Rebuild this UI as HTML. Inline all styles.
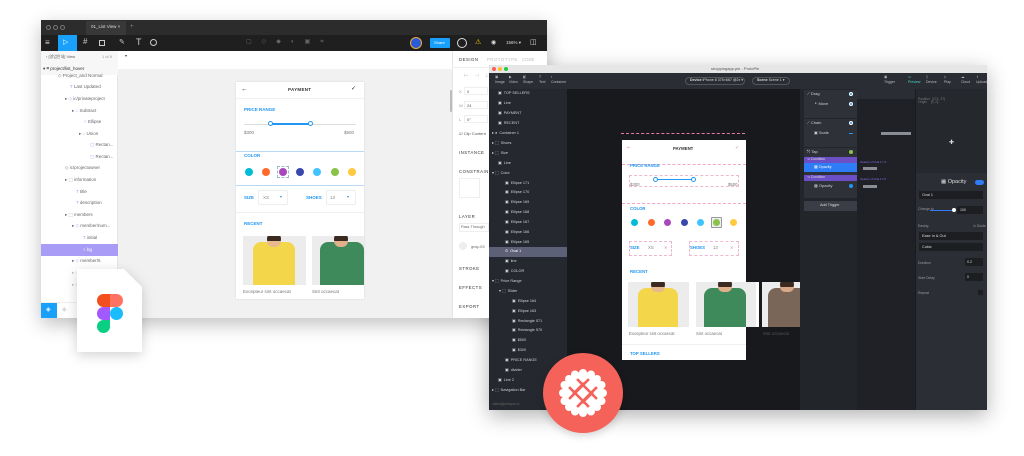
<!DOCTYPE html>
<html><head><meta charset="utf-8"><style>
*{margin:0;padding:0;box-sizing:border-box}
body{width:1024px;height:456px;background:#fff;position:relative;overflow:hidden;font-family:"Liberation Sans",sans-serif}
.a{position:absolute}
.t{position:absolute;white-space:nowrap;line-height:1}
.fl{font-size:4.5px;color:#555}
.pl{font-size:4px;color:#cfd2d8}
.dot{position:absolute;border-radius:50%}
</style></head><body>

<div class="a" style="left:41px;top:20px;width:506px;height:298px;box-shadow:0 6px 18px rgba(0,0,0,.25)"></div>
<div class="a" style="left:489px;top:65px;width:498px;height:345px;box-shadow:0 6px 20px rgba(0,0,0,.3)"></div>

<!-- ================= FIGMA ================= -->
<div class="a" style="left:41px;top:20px;width:506px;height:298px;background:#f1f1f1;overflow:hidden">
  <div class="a" style="left:0;top:0;width:506px;height:15px;background:#2c2c2c"></div>
  <div class="dot" style="left:5px;top:5px;width:5px;height:5px;border:1px solid #777"></div>
  <div class="dot" style="left:12px;top:5px;width:5px;height:5px;border:1px solid #777"></div>
  <div class="dot" style="left:19px;top:5px;width:5px;height:5px;border:1px solid #777"></div>
  <div class="a" style="left:45px;top:1px;width:40px;height:14px;background:#383838"></div>
  <div class="t" style="left:50px;top:5px;font-size:4.5px;color:#ddd">01_List View ×</div>
  <div class="t" style="left:89px;top:4px;font-size:6px;color:#888">+</div>
  <div class="a" style="left:0;top:15px;width:506px;height:16px;background:#1f1f1f"></div>
  <div class="t" style="left:4px;top:19px;font-size:8px;color:#ddd">≡</div>
  <div class="a" style="left:17px;top:15px;width:19px;height:16px;background:#18a0fb"></div>
  <div class="t" style="left:22px;top:19px;font-size:7px;color:#fff">▷</div>
  <div class="t" style="left:42px;top:18px;font-size:8px;color:#ccc">#</div>
  <div class="a" style="left:58px;top:20px;width:6px;height:6px;border:1px solid #ccc"></div>
  <div class="t" style="left:78px;top:19px;font-size:7px;color:#ccc">✎</div>
  <div class="t" style="left:95px;top:18px;font-size:9px;color:#ccc">T</div>
  <div class="dot" style="left:109px;top:19px;width:7px;height:7px;border:1px solid #ccc"></div>
  <div class="t" style="left:205px;top:19px;font-size:6px;color:#666;letter-spacing:10px">▢◇◆◐▣⌗</div>
  <div class="dot" style="left:369px;top:17px;width:12px;height:12px;background:#2a5bd7;border:1.5px solid #f2a93b"></div>
  <div class="a" style="left:389px;top:18px;width:20px;height:10px;background:#18a0fb;border-radius:1px"></div>
  <div class="t" style="left:393px;top:21px;font-size:4px;color:#fff">Share</div>
  <div class="dot" style="left:416px;top:18px;width:10px;height:10px;border:1px solid #ddd"></div>
  <div class="t" style="left:434px;top:19px;font-size:7px;color:#f5c400">⚠</div>
  <div class="t" style="left:450px;top:20px;font-size:6px;color:#ddd">◉</div>
  <div class="t" style="left:465px;top:21px;font-size:4.5px;color:#ddd">156% ▾</div>
  <div class="t" style="left:489px;top:19px;font-size:7px;color:#ddd">◫</div>

  <div class="a" style="left:0;top:31px;width:77px;height:267px;background:#fff;border-right:1px solid #e5e5e5"></div>
  <div class="a" style="left:0;top:31px;width:77px;height:24px;background:#f7f7f7"></div>
  <div class="t fl" style="left:5px;top:35px;font-size:4px">‹ [영업안내] View</div>
  <div class="t fl" style="left:61px;top:35px;font-size:4px;color:#999">1 of 8</div>
  <div class="t fl" style="left:2px;top:47px;color:#333">▾ ⌗ project/list_hover</div>
  <div class="t fl" style="left:17px;top:54px;color:#666">◇ Project_and Normal</div>
  <div class="t fl" style="left:29px;top:65px;color:#666"><span style="color:#a99cf7">T</span> Last Updated</div>
  <div class="t fl" style="left:24px;top:77px;color:#666">▸ <span style="color:#a99cf7">◇</span> ic/privateproject</div>
  <div class="t fl" style="left:31px;top:89px;color:#666">▸ <span style="color:#a99cf7">⌂</span> Subtract</div>
  <div class="t fl" style="left:43px;top:100px;color:#666"><span style="color:#a99cf7">○</span> Ellipse</div>
  <div class="t fl" style="left:38px;top:112px;color:#666">▸ <span style="color:#a99cf7">⌂</span> Union</div>
  <div class="t fl" style="left:49px;top:123px;color:#666"><span style="color:#a99cf7">▢</span> Rectan...</div>
  <div class="t fl" style="left:49px;top:135px;color:#666"><span style="color:#a99cf7">▢</span> Rectan...</div>
  <div class="t fl" style="left:24px;top:146px;color:#666">◇ ic/projectowner</div>
  <div class="t fl" style="left:24px;top:158px;color:#666">▸ ⬚ information</div>
  <div class="t fl" style="left:35px;top:170px;color:#666"><span style="color:#a99cf7">T</span> title</div>
  <div class="t fl" style="left:35px;top:181px;color:#666"><span style="color:#a99cf7">T</span> description</div>
  <div class="t fl" style="left:24px;top:193px;color:#666">▸ ⬚ members</div>
  <div class="t fl" style="left:31px;top:204px;color:#666">▸ <span style="color:#a99cf7">◇</span> member/num...</div>
  <div class="t fl" style="left:42px;top:216px;color:#666"><span style="color:#a99cf7">T</span> initial</div>
  <div class="a" style="left:0;top:224px;width:77px;height:12px;background:#a99cf7"></div>
  <div class="t fl" style="left:42px;top:228px;color:#fff">○ bg</div>
  <div class="t fl" style="left:31px;top:239px;color:#666">▸ <span style="color:#a99cf7">◇</span> member/5</div>
  <div class="t fl" style="left:31px;top:251px;color:#bbb">▸ ◇</div>
  <div class="t fl" style="left:31px;top:263px;color:#bbb">▸ ◇</div>
  <div class="a" style="left:0;top:282px;width:77px;height:1px;background:#eee"></div>
  <div class="a" style="left:0;top:283px;width:16px;height:15px;background:#18a0fb"></div>
  <div class="t" style="left:5px;top:287px;font-size:6px;color:#fff">◈</div>
  <div class="t" style="left:21px;top:287px;font-size:6px;color:#ccc">◈</div>

  <div class="a" style="left:77px;top:31px;width:334px;height:18px;background:#fff"></div>
  <div class="t" style="left:84px;top:34px;font-size:4px;color:#333">▾</div>
  <div class="a" style="left:409px;top:70px;width:2px;height:22px;background:#bbb;border-radius:1px"></div>

  <div class="a" style="left:411px;top:31px;width:95px;height:267px;background:#fff;border-left:1px solid #e5e5e5"></div>
  <div class="t" style="left:418px;top:38px;font-size:4.3px;color:#333;letter-spacing:.5px">DESIGN</div>
  <div class="t" style="left:446px;top:38px;font-size:4.3px;color:#bbb;letter-spacing:.5px">PROTOTYPE</div>
  <div class="t" style="left:481px;top:38px;font-size:4.3px;color:#bbb">CODE</div>
  <div class="a" style="left:411px;top:47px;width:95px;height:1px;background:#eee"></div>
  <div class="t" style="left:423px;top:54px;font-size:5px;color:#bbb;letter-spacing:6px">⊢⊣⊥</div>
  <div class="t" style="left:418px;top:70px;font-size:4px;color:#999">X</div><div class="a" style="left:423px;top:67px;width:24px;height:8px;border:1px solid #eee"></div><div class="t" style="left:426px;top:70px;font-size:4px;color:#555">0</div>
  <div class="t" style="left:418px;top:84px;font-size:4px;color:#999">W</div><div class="a" style="left:423px;top:81px;width:24px;height:8px;border:1px solid #eee"></div><div class="t" style="left:426px;top:84px;font-size:4px;color:#555">24</div>
  <div class="t" style="left:418px;top:98px;font-size:4px;color:#999">L</div><div class="a" style="left:423px;top:95px;width:24px;height:8px;border:1px solid #eee"></div><div class="t" style="left:426px;top:98px;font-size:4px;color:#555">0°</div>
  <div class="t" style="left:418px;top:112px;font-size:4px;color:#555">☑ Clip Content</div>
  <div class="t" style="left:418px;top:131px;font-size:4.3px;color:#333;letter-spacing:.5px">INSTANCE</div>
  <div class="t" style="left:418px;top:150px;font-size:4.3px;color:#333;letter-spacing:.5px">CONSTRAINTS</div>
  <div class="a" style="left:418px;top:158px;width:21px;height:20px;border:1px solid #eee"></div>
  <div class="t" style="left:418px;top:195px;font-size:4.3px;color:#333;letter-spacing:.5px">LAYER</div>
  <div class="a" style="left:418px;top:203px;width:30px;height:9px;border:1px solid #eee"></div>
  <div class="t" style="left:420px;top:206px;font-size:3.8px;color:#666">Pass Through</div>
  <div class="dot" style="left:418px;top:222px;width:8px;height:8px;background:#eee"></div>
  <div class="t" style="left:430px;top:225px;font-size:4px;color:#666">gray-03</div>
  <div class="t" style="left:418px;top:247px;font-size:4.3px;color:#333;letter-spacing:.5px">STROKE</div>
  <div class="t" style="left:418px;top:266px;font-size:4.3px;color:#333;letter-spacing:.5px">EFFECTS</div>
  <div class="t" style="left:418px;top:285px;font-size:4.3px;color:#333;letter-spacing:.5px">EXPORT</div>

  <div class="a" style="left:195px;top:62px;width:128px;height:217px;background:#fff;box-shadow:0 0 2px rgba(0,0,0,.12)">
    <div class="t" style="left:5px;top:4px;font-size:7px;color:#333">←</div>
    <div class="t" style="left:52px;top:6px;font-size:4.5px;color:#333;font-weight:bold;letter-spacing:.3px">PAYMENT</div>
    <div class="t" style="left:115px;top:4px;font-size:6px;color:#333">✓</div>
    <div class="a" style="left:0;top:16px;width:128px;height:1px;background:#f0f0f0"></div>
    <div class="t" style="left:8px;top:26px;font-size:4.5px;color:#2196f3;font-weight:bold">PRICE RANGE</div>
    <div class="a" style="left:8px;top:42px;width:112px;height:1px;background:#ddd"></div>
    <div class="a" style="left:34px;top:41px;width:40px;height:2px;background:#2196f3"></div>
    <div class="dot" style="left:32px;top:39px;width:5px;height:5px;border:1px solid #2196f3;background:#fff"></div>
    <div class="dot" style="left:72px;top:39px;width:5px;height:5px;border:1px solid #2196f3;background:#fff"></div>
    <div class="t" style="left:8px;top:49px;font-size:4.5px;color:#777">$300</div>
    <div class="t" style="left:108px;top:49px;font-size:4.5px;color:#777">$500</div>
    <div class="a" style="left:0;top:69px;width:128px;height:1px;background:#b8d8f5"></div>
    <div class="t" style="left:8px;top:72px;font-size:4.5px;color:#2196f3;font-weight:bold">COLOR</div>
    <div class="dot" style="left:9px;top:86px;width:8px;height:8px;background:#00bcd4"></div>
    <div class="dot" style="left:26px;top:86px;width:8px;height:8px;background:#ff6a2a"></div>
    <div class="a" style="left:41px;top:84px;width:12px;height:12px;border:1px dashed #9bc"></div>
    <div class="dot" style="left:43px;top:86px;width:8px;height:8px;background:#ab47bc"></div>
    <div class="dot" style="left:60px;top:86px;width:8px;height:8px;background:#3949ab"></div>
    <div class="dot" style="left:77px;top:86px;width:8px;height:8px;background:#40c4ff"></div>
    <div class="dot" style="left:95px;top:86px;width:8px;height:8px;background:#8bc34a"></div>
    <div class="dot" style="left:112px;top:86px;width:8px;height:8px;background:#ffc940"></div>
    <div class="a" style="left:0;top:103px;width:128px;height:1px;background:#b8d8f5"></div>
    <div class="t" style="left:8px;top:114px;font-size:4.5px;color:#2196f3;font-weight:bold">SIZE</div>
    <div class="a" style="left:22px;top:108px;width:30px;height:15px;border:1px solid #eee;border-radius:2px"></div>
    <div class="t" style="left:27px;top:114px;font-size:4.5px;color:#888">XS</div><div class="t" style="left:44px;top:113px;font-size:4px;color:#2196f3">▾</div>
    <div class="t" style="left:70px;top:114px;font-size:4.5px;color:#2196f3;font-weight:bold">SHOES</div>
    <div class="a" style="left:90px;top:108px;width:30px;height:15px;border:1px solid #eee;border-radius:2px"></div>
    <div class="t" style="left:94px;top:114px;font-size:4.5px;color:#888">13</div><div class="t" style="left:111px;top:113px;font-size:4px;color:#2196f3">▾</div>
    <div class="a" style="left:0;top:130px;width:128px;height:1px;background:#f0f0f0"></div>
    <div class="t" style="left:8px;top:140px;font-size:4.5px;color:#2196f3;font-weight:bold">RECENT</div>
    <div class="a" style="left:7px;top:154px;width:63px;height:49px;background:#ececec;overflow:hidden">
      <div class="dot" style="left:24px;top:-4px;width:14px;height:14px;background:#3a2a20"></div>
      <div class="a" style="left:10px;top:6px;width:42px;height:46px;background:#f3d64a;border-radius:8px 8px 0 0"></div>
      <div class="a" style="left:24px;top:5px;width:14px;height:6px;background:#e8b98f;border-radius:0 0 7px 7px"></div>
    </div>
    <div class="a" style="left:76px;top:154px;width:52px;height:49px;background:#ececec;overflow:hidden">
      <div class="dot" style="left:22px;top:-4px;width:14px;height:14px;background:#3a2a20"></div>
      <div class="a" style="left:8px;top:6px;width:44px;height:46px;background:#3f8a5a;border-radius:8px 8px 0 0"></div>
      <div class="a" style="left:22px;top:5px;width:14px;height:6px;background:#e0b08a;border-radius:0 0 7px 7px"></div>
    </div>
    <div class="t" style="left:7px;top:208px;font-size:4.5px;color:#777">Excepteur sint occaecat</div>
    <div class="t" style="left:76px;top:208px;font-size:4.5px;color:#777">Sint occaecat</div>
  </div>
</div>

<!-- ================= PROTOPIE ================= -->
<div class="a" style="left:489px;top:65px;width:498px;height:345px;background:#17191d;overflow:hidden">
  <div class="a" style="left:0;top:0;width:498px;height:8px;background:#e6e6e6"></div>
  <div class="dot" style="left:3px;top:2px;width:4px;height:4px;background:#fc5f57"></div>
  <div class="dot" style="left:9px;top:2px;width:4px;height:4px;background:#fdbc2e"></div>
  <div class="dot" style="left:15px;top:2px;width:4px;height:4px;background:#29c840"></div>
  <div class="t" style="left:222px;top:2px;font-size:4px;color:#555">shoppingapp.pie - ProtoPie</div>
  <div class="a" style="left:0;top:8px;width:498px;height:16px;background:#2a2d33"></div>
  <div class="t" style="left:6px;top:10px;font-size:3.5px;color:#bbb;line-height:5px">▣<br>Image</div>
  <div class="t" style="left:20px;top:10px;font-size:3.5px;color:#bbb;line-height:5px">▶<br>Video</div>
  <div class="t" style="left:34px;top:10px;font-size:3.5px;color:#bbb;line-height:5px">◧<br>Shape</div>
  <div class="t" style="left:50px;top:10px;font-size:3.5px;color:#bbb;line-height:5px">T<br>Text</div>
  <div class="t" style="left:62px;top:10px;font-size:3.5px;color:#bbb;line-height:5px">▪<br>Container</div>
  <div class="a" style="left:196px;top:12px;width:60px;height:8px;border:1px solid #555;border-radius:4px"></div>
  <div class="t" style="left:201px;top:14px;font-size:3.6px;color:#ddd"><b>Device</b> iPhone 8 375×667 @2x ▾</div>
  <div class="a" style="left:263px;top:12px;width:38px;height:8px;border:1px solid #555;border-radius:4px"></div>
  <div class="t" style="left:268px;top:14px;font-size:3.6px;color:#ddd"><b>Scene</b> Scene 1 ▾</div>
  <div class="t" style="left:395px;top:10px;font-size:3.5px;color:#bbb;line-height:5px">▣<br>Trigger</div>
  <div class="t" style="left:419px;top:10px;font-size:3.5px;color:#4dc;line-height:5px">▭<br>Preview</div>
  <div class="t" style="left:437px;top:10px;font-size:3.5px;color:#bbb;line-height:5px">▯<br>Device</div>
  <div class="t" style="left:455px;top:10px;font-size:3.5px;color:#bbb;line-height:5px">▷<br>Play</div>
  <div class="t" style="left:472px;top:10px;font-size:3.5px;color:#bbb;line-height:5px">☁<br>Cloud</div>
  <div class="t" style="left:487px;top:10px;font-size:3.5px;color:#bbb;line-height:5px">⇧<br>Upload</div>

  <div class="a" style="left:0;top:24px;width:78px;height:321px;background:#25282e"></div>
  <div class="a" style="left:0;top:182px;width:78px;height:10px;background:#5d6178"></div>
  <div class="a" style="left:0;top:24px;width:78px;height:321px;font-size:3.8px;color:#cfd2d8">
    <div class="t" style="left:9px;top:3px">▣ &nbsp;TOP SELLERS</div>
    <div class="t" style="left:9px;top:13px">▣ &nbsp;Line</div>
    <div class="t" style="left:9px;top:23px">▣ &nbsp;PAYMENT</div>
    <div class="t" style="left:9px;top:33px">▣ &nbsp;RECENT</div>
    <div class="t" style="left:3px;top:43px">▸ ● &nbsp;Container 1</div>
    <div class="t" style="left:3px;top:53px">▸ ⬚ &nbsp;Shoes</div>
    <div class="t" style="left:3px;top:63px">▸ ⬚ &nbsp;Size</div>
    <div class="t" style="left:9px;top:73px">▣ &nbsp;Line</div>
    <div class="t" style="left:3px;top:83px">▾ ⬚ &nbsp;Color</div>
    <div class="t" style="left:16px;top:93px">▣ &nbsp;Ellipse 171</div>
    <div class="t" style="left:16px;top:102px">▣ &nbsp;Ellipse 170</div>
    <div class="t" style="left:16px;top:112px">▣ &nbsp;Ellipse 169</div>
    <div class="t" style="left:16px;top:122px">▣ &nbsp;Ellipse 168</div>
    <div class="t" style="left:16px;top:132px">▣ &nbsp;Ellipse 167</div>
    <div class="t" style="left:16px;top:142px">▣ &nbsp;Ellipse 166</div>
    <div class="t" style="left:16px;top:152px">▣ &nbsp;Ellipse 165</div>
    <div class="t" style="left:16px;top:161px;color:#fff">⊙ &nbsp;Oval 1</div>
    <div class="t" style="left:16px;top:171px">▣ &nbsp;line</div>
    <div class="t" style="left:16px;top:181px">▣ &nbsp;COLOR</div>
    <div class="t" style="left:3px;top:191px">▾ ⬚ &nbsp;Price Range</div>
    <div class="t" style="left:10px;top:201px">▾ ⬚ &nbsp;Slider</div>
    <div class="t" style="left:23px;top:211px">▣ &nbsp;Ellipse 164</div>
    <div class="t" style="left:23px;top:221px">▣ &nbsp;Ellipse 163</div>
    <div class="t" style="left:23px;top:231px">▣ &nbsp;Rectangle 571</div>
    <div class="t" style="left:23px;top:240px">▣ &nbsp;Rectangle 570</div>
    <div class="t" style="left:23px;top:250px">▣ &nbsp;$500</div>
    <div class="t" style="left:23px;top:260px">▣ &nbsp;$300</div>
    <div class="t" style="left:16px;top:270px">▣ &nbsp;PRICE RANGE</div>
    <div class="t" style="left:16px;top:280px">▣ &nbsp;divider</div>
    <div class="t" style="left:9px;top:290px">▣ &nbsp;Line 2</div>
    <div class="t" style="left:3px;top:300px">▸ ⬚ &nbsp;Navigation Bar</div>
    <div class="t" style="left:3px;top:314px;color:#666;font-size:3.4px">claire@protopie.io</div>
  </div>

  <div class="a" style="left:132px;top:68px;width:124px;height:7px;border-top:1px dashed #e87aa8"></div>
  <div class="a" style="left:133px;top:75px;width:124px;height:220px;background:#fff">
    <div class="t" style="left:5px;top:6px;font-size:5px;color:#e87aa8">⇠</div>
    <div class="t" style="left:51px;top:7px;font-size:4.3px;color:#333;font-weight:bold">PAYMENT</div>
    <div class="t" style="left:113px;top:6px;font-size:5px;color:#e87aa8">✓</div>
    <div class="a" style="left:0;top:24px;width:124px;height:1px;border-top:1px dashed #f0a8c8"></div>
    <div class="t" style="left:8px;top:24px;font-size:4.3px;color:#2196f3;font-weight:bold">PRICE RANGE</div>
    <div class="a" style="left:7px;top:35px;width:110px;height:12px;border:1px dashed #f0b8d0"></div>
    <div class="a" style="left:33px;top:39px;width:38px;height:1px;background:#2196f3"></div>
    <div class="dot" style="left:31px;top:37px;width:5px;height:5px;border:1px solid #2196f3;background:#fff"></div>
    <div class="dot" style="left:69px;top:37px;width:5px;height:5px;border:1px solid #2196f3;background:#fff"></div>
    <div class="t" style="left:8px;top:43px;font-size:4.3px;color:#777">$300</div>
    <div class="t" style="left:106px;top:43px;font-size:4.3px;color:#777">$500</div>
    <div class="a" style="left:0;top:63px;width:124px;height:1px;border-top:1px dashed #f0a8c8"></div>
    <div class="t" style="left:8px;top:67px;font-size:4.3px;color:#2196f3;font-weight:bold">COLOR</div>
    <div class="dot" style="left:9px;top:79px;width:7px;height:7px;background:#00bcd4"></div>
    <div class="dot" style="left:26px;top:79px;width:7px;height:7px;background:#ff6a2a"></div>
    <div class="dot" style="left:42px;top:79px;width:7px;height:7px;background:#ab47bc"></div>
    <div class="dot" style="left:59px;top:79px;width:7px;height:7px;background:#3949ab"></div>
    <div class="dot" style="left:75px;top:79px;width:7px;height:7px;background:#40c4ff"></div>
    <div class="a" style="left:89px;top:77px;width:11px;height:11px;border:1px solid #999;background:#eee;border-radius:1px"></div>
    <div class="dot" style="left:91px;top:79px;width:7px;height:7px;background:#8bc34a"></div>
    <div class="dot" style="left:108px;top:79px;width:7px;height:7px;background:#ffc940"></div>
    <div class="a" style="left:7px;top:101px;width:43px;height:15px;border:1px dashed #f0b8d0"></div>
    <div class="t" style="left:8px;top:106px;font-size:4.3px;color:#2196f3;font-weight:bold">SIZE</div>
    <div class="t" style="left:26px;top:106px;font-size:4.3px;color:#888">XS</div><div class="t" style="left:42px;top:106px;font-size:4px;color:#e87aa8">✕</div>
    <div class="a" style="left:67px;top:101px;width:50px;height:15px;border:1px dashed #f0b8d0"></div>
    <div class="t" style="left:68px;top:106px;font-size:4.3px;color:#2196f3;font-weight:bold">SHOES</div>
    <div class="t" style="left:91px;top:106px;font-size:4.3px;color:#888">13</div><div class="t" style="left:108px;top:106px;font-size:4px;color:#e87aa8">✕</div>
    <div class="t" style="left:8px;top:130px;font-size:4.3px;color:#2196f3;font-weight:bold">RECENT</div>
    <div class="a" style="left:6px;top:142px;width:61px;height:45px;background:#ececec;overflow:hidden">
      <div class="dot" style="left:23px;top:-4px;width:14px;height:13px;background:#3a2a20"></div>
      <div class="a" style="left:10px;top:6px;width:40px;height:42px;background:#f3d64a;border-radius:8px 8px 0 0"></div>
      <div class="a" style="left:23px;top:5px;width:14px;height:5px;background:#e8b98f;border-radius:0 0 7px 7px"></div>
    </div>
    <div class="t" style="left:7px;top:192px;font-size:4.3px;color:#777">Excepteur sint occaecat</div>
    <div class="t" style="left:74px;top:192px;font-size:4.3px;color:#777">Sint occaecat</div>
    <div class="a" style="left:0;top:204px;width:124px;height:1px;background:#f0f0f0"></div>
    <div class="t" style="left:8px;top:212px;font-size:4.3px;color:#2196f3;font-weight:bold">TOP SELLERS</div>
  </div>
  <div class="a" style="left:207px;top:217px;width:61px;height:45px;background:#ececec;overflow:hidden">
    <div class="dot" style="left:22px;top:-4px;width:14px;height:13px;background:#3a2a20"></div>
    <div class="a" style="left:8px;top:6px;width:42px;height:42px;background:#3f8a5a;border-radius:8px 8px 0 0"></div>
    <div class="a" style="left:22px;top:5px;width:14px;height:5px;background:#e0b08a;border-radius:0 0 7px 7px"></div>
  </div>
  <div class="a" style="left:267px;top:217px;width:3px;height:45px;background:#fff"></div>
  <div class="a" style="left:273px;top:217px;width:38px;height:45px;background:#ececec;overflow:hidden">
    <div class="dot" style="left:18px;top:-4px;width:14px;height:13px;background:#3a2a20"></div>
    <div class="a" style="left:6px;top:6px;width:40px;height:42px;background:#7a6658;border-radius:8px 8px 0 0"></div>
    <div class="a" style="left:18px;top:5px;width:14px;height:5px;background:#d9a886;border-radius:0 0 7px 7px"></div>
  </div>
  <div class="t" style="left:274px;top:267px;font-size:4.3px;color:#555">Sint occaecat</div>

  <div class="a" style="left:311px;top:24px;width:57px;height:321px;background:#22252a"></div>
  <div class="a" style="left:315px;top:25px;width:53px;height:28px;background:#2e3138"></div>
  <div class="a" style="left:315px;top:54px;width:53px;height:28px;background:#2e3138"></div>
  <div class="a" style="left:315px;top:83px;width:53px;height:50px;background:#2e3138"></div>
  <div class="t pl" style="left:318px;top:27px">⟋ Drag</div><div class="dot" style="left:360px;top:27px;width:4px;height:4px;background:#2196f3;border:1px solid #fff"></div>
  <div class="t pl" style="left:325px;top:37px">⚬ Move</div><div class="dot" style="left:360px;top:37px;width:4px;height:4px;background:#2196f3;border:1px solid #fff"></div>
  <div class="t pl" style="left:318px;top:56px">⟋ Chain</div><div class="dot" style="left:360px;top:56px;width:4px;height:4px;background:#2196f3;border:1px solid #fff"></div>
  <div class="t pl" style="left:325px;top:66px">▣ Scale</div><div class="a" style="left:360px;top:68px;width:4px;height:1px;background:#2196f3"></div>
  <div class="t pl" style="left:318px;top:85px">⤲ Tap</div><div class="dot" style="left:360px;top:85px;width:4px;height:4px;background:#8bc34a"></div>
  <div class="a" style="left:315px;top:92px;width:53px;height:6px;background:#6c4fc4"></div>
  <div class="t" style="left:318px;top:93px;font-size:3.4px;color:#ddd">⋖ Condition</div>
  <div class="a" style="left:315px;top:98px;width:53px;height:9px;background:#2e7cf6"></div>
  <div class="t" style="left:325px;top:101px;font-size:3.8px;color:#fff">▦ Opacity</div>
  <div class="a" style="left:315px;top:110px;width:53px;height:6px;background:#6c4fc4"></div>
  <div class="t" style="left:318px;top:111px;font-size:3.4px;color:#ddd">⋖ Condition</div>
  <div class="t pl" style="left:325px;top:119px">▦ Opacity</div><div class="dot" style="left:360px;top:119px;width:4px;height:4px;background:#2196f3"></div>
  <div class="a" style="left:315px;top:136px;width:53px;height:10px;background:#3a3d45"></div>
  <div class="t" style="left:331px;top:139px;font-size:3.8px;color:#ddd">Add Trigger</div>

  <div class="a" style="left:368px;top:24px;width:58px;height:321px;background:#1f2126"></div>
  <div class="a" style="left:368px;top:24px;width:58px;height:10px;background:#2a2d33"></div>
  <div class="a" style="left:392px;top:67px;width:30px;height:3px;background:#8a8d93"></div>
  <div class="t" style="left:371px;top:96px;font-size:2.8px;color:#8a6ff0">Opacity of Oval 1 = 0</div>
  <div class="a" style="left:374px;top:102px;width:14px;height:3px;background:#8a8d93"></div>
  <div class="t" style="left:371px;top:113px;font-size:2.8px;color:#8a6ff0">Opacity of Oval 1 ≠ 0</div>
  <div class="a" style="left:374px;top:120px;width:14px;height:3px;background:#8a8d93"></div>

  <div class="a" style="left:426px;top:24px;width:72px;height:321px;background:#2b2e34;border-left:1px solid #1a1c20"></div>
  <div class="a" style="left:427px;top:24px;width:71px;height:84px;background:#25282d"></div>
  <div class="t" style="left:429px;top:33px;font-size:3.4px;color:#777">Position &nbsp;[274, 37]<br>Origin &nbsp;&nbsp;&nbsp;[0, 0]</div>
  <div class="t" style="left:460px;top:75px;font-size:6px;color:#ddd">✚</div>
  <div class="t" style="left:452px;top:115px;font-size:5.5px;color:#ddd">▦ Opacity</div>
  <div class="a" style="left:486px;top:115px;width:9px;height:5px;background:#2e7cf6;border-radius:3px"></div>
  <div class="a" style="left:430px;top:126px;width:64px;height:8px;background:#1c1e22"></div>
  <div class="t" style="left:433px;top:129px;font-size:3.8px;color:#ddd">Oval 1</div>
  <div class="t" style="left:429px;top:143px;font-size:3.4px;color:#999">Change to</div>
  <div class="a" style="left:441px;top:145px;width:23px;height:1px;background:#2e7cf6"></div>
  <div class="dot" style="left:463px;top:143px;width:4px;height:4px;background:#fff"></div>
  <div class="a" style="left:468px;top:141px;width:26px;height:8px;background:#1c1e22"></div>
  <div class="t" style="left:471px;top:144px;font-size:3.6px;color:#ddd">100</div>
  <div class="t" style="left:429px;top:160px;font-size:3.4px;color:#999">Easing</div>
  <div class="t" style="left:484px;top:160px;font-size:3.4px;color:#999">⊙ Guide</div>
  <div class="a" style="left:430px;top:167px;width:64px;height:8px;background:#1c1e22"></div>
  <div class="t" style="left:433px;top:170px;font-size:3.8px;color:#ddd">Ease In &amp; Out</div>
  <div class="a" style="left:430px;top:178px;width:64px;height:8px;background:#1c1e22"></div>
  <div class="t" style="left:433px;top:181px;font-size:3.8px;color:#ddd">Cubic</div>
  <div class="t" style="left:429px;top:197px;font-size:3.4px;color:#999">Duration</div>
  <div class="a" style="left:476px;top:193px;width:18px;height:8px;background:#1c1e22"></div>
  <div class="t" style="left:478px;top:196px;font-size:3.6px;color:#ddd">0.2</div>
  <div class="t" style="left:429px;top:212px;font-size:3.4px;color:#999">Start Delay</div>
  <div class="a" style="left:476px;top:208px;width:18px;height:8px;background:#1c1e22"></div>
  <div class="t" style="left:478px;top:211px;font-size:3.6px;color:#ddd">0</div>
  <div class="t" style="left:429px;top:227px;font-size:3.4px;color:#999">Repeat</div>
  <div class="a" style="left:489px;top:225px;width:5px;height:5px;background:#1c1e22"></div>
</div>

<div class="a" style="left:77px;top:269px;width:65px;height:83px;filter:drop-shadow(0 3px 6px rgba(0,0,0,.18))">
  <svg width="65" height="83" viewBox="0 0 65 83"><path d="M0 0H47L65 18V83H0Z" fill="#fff"/></svg>
</div>
<svg class="a" style="left:97px;top:294px" width="26" height="40" viewBox="0 0 26 40">
  <path d="M6.5 0H13V13H6.5A6.5 6.5 0 0 1 6.5 0Z" fill="#f24e1e"/>
  <path d="M13 0H19.5A6.5 6.5 0 0 1 19.5 13H13Z" fill="#ff7262"/>
  <path d="M6.5 13H13V26H6.5A6.5 6.5 0 0 1 6.5 13Z" fill="#a259ff"/>
  <circle cx="19.5" cy="19.5" r="6.5" fill="#1abcfe"/>
  <path d="M6.5 26H13V32.5A6.5 6.5 0 1 1 6.5 26Z" fill="#0acf83"/>
</svg>

<div class="dot" style="left:543px;top:353px;width:80px;height:80px;background:#f4625a;box-shadow:0 3px 8px rgba(0,0,0,.15)"></div>
<svg class="a" style="left:558px;top:368px" width="50" height="50" viewBox="0 0 50 50">
  <g fill="#fff">
    <circle cx="25" cy="25" r="21"/>
    <circle cx="25" cy="5" r="4"/><circle cx="25" cy="45" r="4"/><circle cx="5" cy="25" r="4"/><circle cx="45" cy="25" r="4"/>
    <circle cx="11" cy="11" r="4"/><circle cx="39" cy="11" r="4"/><circle cx="11" cy="39" r="4"/><circle cx="39" cy="39" r="4"/>
    <circle cx="17" cy="6.5" r="4"/><circle cx="33" cy="6.5" r="4"/><circle cx="17" cy="43.5" r="4"/><circle cx="33" cy="43.5" r="4"/>
    <circle cx="6.5" cy="17" r="4"/><circle cx="6.5" cy="33" r="4"/><circle cx="43.5" cy="17" r="4"/><circle cx="43.5" cy="33" r="4"/>
  </g>
  <g stroke="#f4625a" stroke-width="2.6" fill="none" stroke-linecap="square">
    <path d="M12 20L30 38M20 12L38 30M12 30L30 12M20 38L38 20"/>
    <path d="M16 25L25 16M25 34L34 25"/>
  </g>
</svg>
</body></html>
